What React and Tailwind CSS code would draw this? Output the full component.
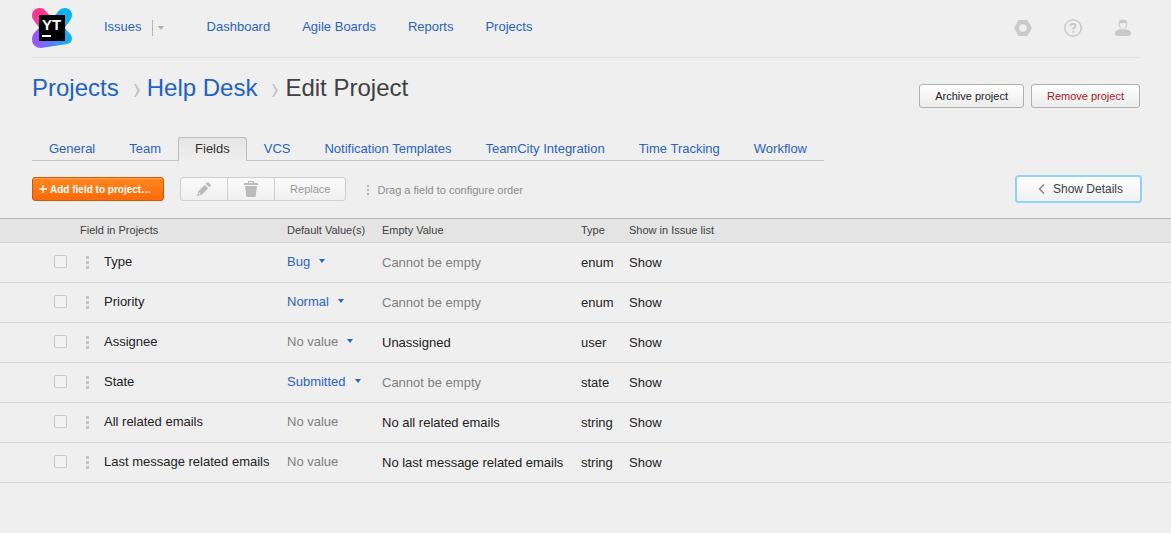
import React from "react";

const navLinks = ["Dashboard", "Agile Boards", "Reports", "Projects"];

const tabs = [
  "General",
  "Team",
  "Fields",
  "VCS",
  "Notification Templates",
  "TeamCity Integration",
  "Time Tracking",
  "Workflow",
];

const fields = [
  { name: "Type", value: "Bug", menu: true, empty: "Cannot be empty", type: "enum" },
  { name: "Priority", value: "Normal", menu: true, empty: "Cannot be empty", type: "enum" },
  { name: "Assignee", value: "No value", menu: true, empty: "Unassigned", type: "user" },
  { name: "State", value: "Submitted", menu: true, empty: "Cannot be empty", type: "state" },
  { name: "All related emails", value: "No value", menu: false, empty: "No all related emails", type: "string" },
  { name: "Last message related emails", value: "No value", menu: false, empty: "No last message related emails", type: "string" },
];

function Logo() {
  return (
    <svg width="40" height="40" viewBox="0 0 40 40" role="img" aria-label="YouTrack">
      <defs>
        <linearGradient id="lower" x1="0" y1="0" x2="1" y2="0">
          <stop offset="0.1" stopColor="#9a55fb" />
          <stop offset="0.45" stopColor="#5f78fa" />
          <stop offset="0.85" stopColor="#0fb0f7" />
        </linearGradient>
        <linearGradient id="left" x1="0" y1="0" x2="0" y2="1">
          <stop offset="0" stopColor="#ff318c" />
          <stop offset="0.45" stopColor="#fb3a9c" />
          <stop offset="1" stopColor="#8f5cfb" />
        </linearGradient>
      </defs>
      <path d="M7.500 0C11 0 13 2 15 4.500L24 15L12 26L2.500 13.500C1 11.500 0 10 0 7.500C0 3 3.500 0 7.500 0Z" fill="url(#left)" />
      <path d="M8 19L3 24C1 26 0 28 0 31.500C0 37 4 40 9 40L35 36C38 35.500 40 33.500 40 30.500C40 28.500 39 27 38 26L31 18Z" fill="url(#lower)" />
      <path d="M33 0C37 0 40 3 40 7C40 9 39 11 38 12.500L31 22L20 12L26 3.500C28 1 30 0 33 0Z" fill="#10b0f6" />
      <rect x="7" y="7" width="26" height="26" fill="#000" />
      <text x="10" y="22" fill="#fff" fontFamily="Liberation Sans, Arial, sans-serif" fontWeight="700" fontSize="15">YT</text>
      <rect x="10" y="27" width="9" height="2" fill="#fff" />
    </svg>
  );
}

function Caret() {
  return (
    <svg width="6" height="4" viewBox="0 0 6 4" className="fill-current" aria-hidden="true">
      <path d="M0 0H6L3 4Z" />
    </svg>
  );
}

function Grip({ small }) {
  return small ? (
    <svg width="2" height="10" viewBox="0 0 2 10" fill="#b5b5b5" aria-hidden="true">
      <path d="M0 0h2v2H0zM0 4h2v2H0zM0 8h2v2H0z" />
    </svg>
  ) : (
    <svg width="3" height="13" viewBox="0 0 3 13" fill="#c4c4c4" aria-hidden="true">
      <path d="M0 0h3v3H0zM0 5h3v3H0zM0 10h3v3H0z" />
    </svg>
  );
}

function Separator() {
  return (
    <svg width="6" height="13" viewBox="0 0 6 13" fill="#c6c6c6" className="mt-1" aria-hidden="true">
      <path d="M0 0H2L6 6.500L2 13H0L3.500 6.500Z" />
    </svg>
  );
}

function Header() {
  return (
    <header className="flex h-[58px] items-start border-b border-[#e2e2e2] pt-2">
      <a href="#home" className="block w-[72px]"><Logo /></a>
      <nav className="flex pt-2 text-[13px] leading-5 text-[#2a62c0]">
        <a href="#issues" className="pt-px">Issues</a>
        <span className="mt-1 ml-2.5 h-4 w-px bg-[#b5b5b5]" />
        <button type="button" aria-label="Issues menu" className="mr-[43px] flex h-6 items-center pl-[5px] text-[#b0b0b0]">
          <Caret />
        </button>
        <div className="flex gap-8 pt-px">
          {navLinks.map((l) => <a key={l} href="#nav">{l}</a>)}
        </div>
      </nav>
      <div className="mt-[11px] mr-2 ml-auto flex items-center gap-8">
        <button type="button" aria-label="Administration">
          <svg width="18" height="18" viewBox="0 0 18 18" fill="#c9c9c9">
            <path fillRule="evenodd" d="M4.700 1H13.300L18 9L13.300 17H4.700L0 9ZM9 5.200A3.800 3.800 0 1 0 9 12.800A3.800 3.800 0 1 0 9 5.200Z" />
          </svg>
        </button>
        <button type="button" aria-label="Help">
          <svg width="18" height="18" viewBox="0 0 18 18" fill="none" stroke="#c9c9c9">
            <circle cx="9" cy="9" r="8.200" strokeWidth="1.600" />
            <path d="M6.500 7.200C6.500 5.500 7.500 4.800 9 4.800C10.500 4.800 11.500 5.600 11.500 6.900C11.500 8.500 9.100 8.700 9.100 10.600" strokeWidth="1.900" />
            <path d="M8.100 12H10.100V13.900H8.100Z" fill="#c9c9c9" stroke="none" />
          </svg>
        </button>
        <button type="button" aria-label="Profile">
          <svg width="18" height="18" viewBox="0 0 18 18">
            <path d="M1 14.500C1 11.800 3.500 11 6.500 10.300L9 11.500L11.500 10.300C14.500 11 17 11.800 17 14.500C17 16 16 17 14.500 17H3.500C2 17 1 16 1 14.500Z" fill="#c9c9c9" />
            <path d="M5.200 4.500C5.200 2 6.800 1.300 9 1.300C11.300 1.300 12.800 2.200 12.800 4.500C12.800 7.500 11 10.700 9 10.700C7 10.700 5.200 7.500 5.200 4.500Z" fill="#efefef" stroke="#c9c9c9" />
            <path d="M4.800 5.500C4.300 2 6.500 .8 9 .8C11.800 .8 13.700 2 13.200 5.500L12 4.200C10.500 4.800 9 3.600 7.500 4.200L6 4Z" fill="#c9c9c9" />
          </svg>
        </button>
      </div>
    </header>
  );
}

function TitleBar() {
  return (
    <div className="flex items-start justify-between pt-3.5">
      <h1 className="flex items-center text-2xl leading-8 text-[#404040]">
        <a href="#projects" className="mr-[15px] text-[#1d62c4]">Projects</a>
        <Separator />
        <a href="#helpdesk" className="mr-[15px] ml-[7px] text-[#1d62c4]">Help Desk</a>
        <Separator />
        <span className="ml-[7px]">Edit Project</span>
      </h1>
      <div className="mt-3 flex gap-[7px] text-[11px] leading-4">
        <button type="button" className="h-6 rounded-[3px] border border-[#b0b0b0] bg-linear-to-b from-white to-[#ececec] px-[15px] text-[#222]">Archive project</button>
        <button type="button" className="h-6 rounded-[3px] border border-[#b0b0b0] bg-linear-to-b from-white to-[#ececec] px-[15px] text-[#a31523]">Remove project</button>
      </div>
    </div>
  );
}

function Tabs() {
  return (
    <nav className="mt-[29px] flex">
      {tabs.map((t) =>
        t === "Fields" ? (
          <a key={t} href="#tab" aria-current="page" className="h-6 rounded-t-[3px] border border-b-0 border-[#bdbdbd] bg-linear-to-b from-[#e4e4e4] to-[#efefef] px-4 text-[13px] leading-[22px] text-[#333]">{t}</a>
        ) : (
          <a key={t} href="#tab" className="h-6 border-b border-[#c6c6c6] px-[17px] text-[13px] leading-6 text-[#2a62c0]">{t}</a>
        )
      )}
    </nav>
  );
}

function Toolbar() {
  return (
    <div className="flex items-center pt-4 pb-[17px]">
      <button type="button" className="flex h-6 items-center gap-[3px] rounded-[3px] border border-[#c65a08] bg-linear-to-b from-[#ff871f] to-[#ff6a05] pr-3 pl-1.5 text-[10px] font-bold text-white shadow-[inset_0_1px_0_#ffa052]">
        <svg width="8" height="8" viewBox="0 0 8 8" fill="#fff" aria-hidden="true"><path d="M3.300 0H4.700V3.300H8V4.700H4.700V8H3.300V4.700H0V3.300H3.300Z" /></svg>
        Add field to project…
      </button>
      <div className="ml-4 flex h-6 divide-x divide-[#cfcfcf] rounded-[3px] border border-[#cfcfcf] bg-linear-to-b from-[#fafafa] to-[#f0f0f0] text-[11px] text-[#999]">
        <button type="button" aria-label="Edit" className="flex w-[47px] items-center justify-center">
          <svg width="14" height="14" viewBox="0 0 16 16" fill="#bababa"><path d="M0 16L1.500 10.500L8.800 3.200L12.800 7.200L5.500 14.500ZM9.900 2.100L11.500 .6Q12.400 0 13.300 .6L15.400 2.700Q16 3.600 15.400 4.500L13.900 6.100Z" /><path d="M2.600 11.600L4.400 13.400L2.600 14L2 13.400Z" fill="#f4f4f4" /></svg>
        </button>
        <button type="button" aria-label="Delete" className="flex w-[47px] items-center justify-center">
          <svg width="14" height="16" viewBox="0 0 14 16" fill="#bababa"><path d="M4 0H10V2H14V4H0V2H4ZM5.200 1V2H8.800V1Z" fillRule="evenodd" /><path d="M1 5H13L11.800 14.500Q11.600 16 10.300 16H3.700Q2.400 16 2.200 14.500Z" /></svg>
        </button>
        <button type="button" className="px-[15px]">Replace</button>
      </div>
      <div className="ml-[21px] flex items-center gap-2 pt-0.5 text-[11px] leading-4 text-[#8c8c8c]">
        <Grip small />
        Drag a field to configure order
      </div>
      <button type="button" className="ml-auto flex h-6 items-center gap-2 rounded-[2px] bg-linear-to-b from-white to-[#f0f0f0] pr-[17px] pl-[21px] text-xs text-[#404040] ring-2 ring-[#8cd3f8]">
        <svg width="7" height="10" viewBox="0 0 7 10" fill="none" stroke="#858585" strokeWidth="1.500" aria-hidden="true"><path d="M6 .5L1.500 5L6 9.500" /></svg>
        Show Details
      </button>
    </div>
  );
}

function FieldRow({ field }) {
  const id = "select-" + field.name.toLowerCase().replaceAll(" ", "-");
  const valueColor = field.value === "No value" ? "text-[#808080]" : "text-[#2a62c0]";
  const emptyColor = field.empty === "Cannot be empty" ? "text-[#808080]" : "text-[#222]";
  return (
    <tr className="h-10 border-b border-[#d6d6d6]">
      <td className="pl-[54px]">
        <input id={id} type="checkbox" className="mb-0.5 block size-[13px] appearance-none rounded-[2px] border border-[#c8c8c8] bg-[#f2f2f2] checked:bg-[#2a62c0]" />
      </td>
      <td>
        <div className="flex items-center pl-1.5">
          <Grip />
          <label htmlFor={id} className="mb-0.5 ml-[15px]">{field.name}</label>
        </div>
      </td>
      <td className={valueColor}>
        {field.menu ? (
          <button type="button" className="mb-0.5 flex items-center gap-[9px]">
            {field.value}
            <span className="pb-px text-[#1f68c8]"><Caret /></span>
          </button>
        ) : (
          <span className="mb-0.5 block">{field.value}</span>
        )}
      </td>
      <td className={emptyColor}>{field.empty}</td>
      <td>{field.type}</td>
      <td>Show</td>
    </tr>
  );
}

function FieldTable() {
  return (
    <table className="w-full table-fixed border-collapse text-left text-[13px] leading-4 whitespace-nowrap text-[#222]">
      <colgroup>
        <col className="w-20" />
        <col className="w-[207px]" />
        <col className="w-[95px]" />
        <col className="w-[199px]" />
        <col className="w-12" />
        <col />
      </colgroup>
      <thead>
        <tr className="h-6 border-t border-b border-t-[#bbb] border-b-[#d6d6d6] bg-[#e4e4e4] text-[11px] text-[#404040]">
          <td />
          <th className="pb-0.5 font-normal">Field in Projects</th>
          <th className="pb-0.5 font-normal">Default Value(s)</th>
          <th className="pb-0.5 font-normal">Empty Value</th>
          <th className="pb-0.5 font-normal">Type</th>
          <th className="pb-0.5 font-normal">Show in Issue list</th>
        </tr>
      </thead>
      <tbody>
        {fields.map((f) => <FieldRow key={f.name} field={f} />)}
      </tbody>
    </table>
  );
}

export default function App() {
  return (
    <div className="min-h-screen bg-[#efefef] font-['Liberation_Sans',Arial,sans-serif]">
      <div className="pr-[31px] pl-8">
        <Header />
        <TitleBar />
        <Tabs />
        <Toolbar />
      </div>
      <FieldTable />
    </div>
  );
}
